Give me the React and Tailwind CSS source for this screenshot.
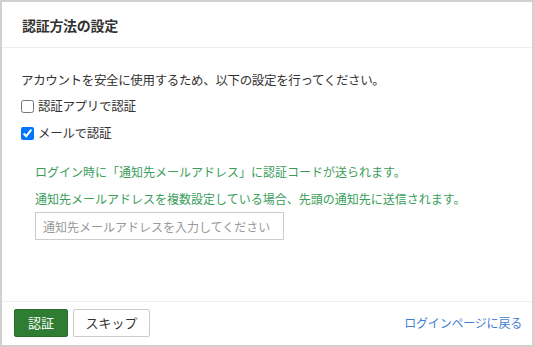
import React from "react";

const font = { fontFamily: '"Noto Sans CJK JP", "Noto Sans", sans-serif' };

export default function App() {
  return (
    <div
      className="w-[534px] h-[347px] border-2 border-[#d0d0d0] bg-white flex flex-col text-[#333]"
      style={font}
    >
      <div className="h-[46px] shrink-0 border-b border-[#eeeeee] flex items-center pl-[20px]">
        <span className="text-[14px] font-bold leading-[20px] tracking-[-0.3px]">認証方法の設定</span>
      </div>
      <div className="flex-1 pl-[19px] pt-[22px] flex flex-col">
        <p className="text-[12.5px] leading-[20px] tracking-[-0.35px]">
          アカウントを安全に使用するため、以下の設定を行ってください。
        </p>
        <label className="mt-[6px] flex items-center h-[20px] text-[12.5px] tracking-[-0.3px]">
          <input type="checkbox" className="w-[13px] h-[13px] m-0 mr-[4px]" />
          <span>認証アプリで認証</span>
        </label>
        <label className="mt-[7px] flex items-center h-[20px] text-[12.5px] tracking-[-0.3px]">
          <input type="checkbox" defaultChecked className="w-[13px] h-[13px] m-0 mr-[4px]" />
          <span>メールで認証</span>
        </label>
        <div className="pl-[14px] mt-[19px] text-[#3a9d5a] text-[12px] leading-[20px]">
          <p>ログイン時に「通知先メールアドレス」に認証コードが送られます。</p>
          <p className="mt-[7px]">通知先メールアドレスを複数設定している場合、先頭の通知先に送信されます。</p>
          <input
            type="text"
            placeholder="通知先メールアドレスを入力してください"
            className="mt-[3px] w-[249px] h-[28px] border border-[#cccccc] pl-[7px] pr-[4px] text-[12px] text-[#333] placeholder:text-[#999] outline-none"
          />
        </div>
      </div>
      <div className="h-[44px] shrink-0 border-t border-[#eeeeee] flex items-start justify-between pl-[12px] pr-[10px] pt-[7px]">
        <div className="flex gap-[5px]">
          <button className="w-[54px] h-[28px] bg-[#2e7d32] text-white text-[13px] rounded-[2px] border border-[#2a6e2d]">
            認証
          </button>
          <button className="w-[77px] h-[28px] bg-white text-[#333] text-[13px] rounded-[2px] border border-[#cccccc]">
            スキップ
          </button>
        </div>
        <a className="text-[#3f7fcf] text-[12px] leading-[28px] tracking-[-0.2px]" href="#">
          ログインページに戻る
        </a>
      </div>
    </div>
  );
}
